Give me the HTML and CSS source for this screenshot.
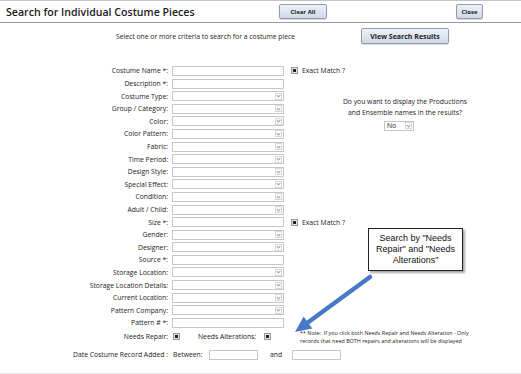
FILE: index.html
```html
<!DOCTYPE html>
<html>
<head>
<meta charset="utf-8">
<link rel="stylesheet" href="styles.css">
</head>
<body>
<div class="page">
  <header class="top">
    <h1 class="title">Search for Individual Costume Pieces</h1>
    <button class="btn btn-clear">Clear All</button>
    <button class="btn btn-close">Close</button>
  </header>
  <div class="intro">
    <p class="intro-text">Select one or more criteria to search for a costume piece</p>
    <button class="btn btn-view">View Search Results</button>
  </div>
  <div class="main">
    <div class="form">
      <label class="lbl">Costume Name *:</label><div class="txt"></div><div class="extra"><span class="chk"></span><span class="extra-text">Exact Match ?</span></div>
      <label class="lbl">Description *:</label><div class="txt"></div><div></div>
      <label class="lbl">Costume Type:</label><div class="sel"><span class="arr"></span></div><div></div>
      <label class="lbl">Group / Category:</label><div class="sel"><span class="arr"></span></div><div></div>
      <label class="lbl">Color:</label><div class="sel"><span class="arr"></span></div><div></div>
      <label class="lbl">Color Pattern:</label><div class="sel"><span class="arr"></span></div><div></div>
      <label class="lbl">Fabric:</label><div class="sel"><span class="arr"></span></div><div></div>
      <label class="lbl">Time Period:</label><div class="sel"><span class="arr"></span></div><div></div>
      <label class="lbl">Design Style:</label><div class="sel"><span class="arr"></span></div><div></div>
      <label class="lbl">Special Effect:</label><div class="sel"><span class="arr"></span></div><div></div>
      <label class="lbl">Condition:</label><div class="sel"><span class="arr"></span></div><div></div>
      <label class="lbl">Adult / Child:</label><div class="sel"><span class="arr"></span></div><div></div>
      <label class="lbl">Size *:</label><div class="txt"></div><div class="extra"><span class="chk"></span><span class="extra-text">Exact Match ?</span></div>
      <label class="lbl">Gender:</label><div class="sel"><span class="arr"></span></div><div></div>
      <label class="lbl">Designer:</label><div class="sel"><span class="arr"></span></div><div></div>
      <label class="lbl">Source *:</label><div class="txt"></div><div></div>
      <label class="lbl">Storage Location:</label><div class="sel"><span class="arr"></span></div><div></div>
      <label class="lbl">Storage Location Details:</label><div class="sel"><span class="arr"></span></div><div></div>
      <label class="lbl">Current Location:</label><div class="sel"><span class="arr"></span></div><div></div>
      <label class="lbl">Pattern Company:</label><div class="sel"><span class="arr"></span></div><div></div>
      <label class="lbl">Pattern # *:</label><div class="txt"></div><div></div>
      <label class="lbl">Needs Repair:</label>
      <div class="needs"><span class="chk"></span><span class="needs-alt">Needs Alterations:</span><span class="chk"></span></div>
      <p class="note">** Note:&nbsp; If you click both Needs Repair and Needs Alteration - Only<br>records that need BOTH repairs and alterations will be displayed</p>
      <label class="lbl">Date Costume Record Added :</label>
      <div class="dates"><span class="between">Between:</span><div class="txt date-in"></div><span class="and">and</span><div class="txt date-in"></div></div>
    </div>
    <aside class="side">
      <p class="side-q">Do you want to display the Productions<br>and Ensemble names in the results?</p>
      <div class="sel sel-no"><span class="no-val">No</span><span class="arr"></span></div>
    </aside>
  </div>
  <div class="callout">Search by "Needs<br>Repair" and "Needs<br>Alterations"</div>
  <svg class="arrow" width="85" height="65" viewBox="0 0 85 65">
    <line x1="80" y1="5" x2="17.5" y2="50.8" stroke="#4a78c8" stroke-width="4.5" stroke-linecap="round"/>
    <polygon points="5,60 22.3,56.4 13.6,44.6" fill="#4a78c8"/>
  </svg>
</div>
</body>
</html>
```
FILE: styles.css
```css
* { box-sizing: border-box; }
html, body { margin: 0; padding: 0; background: #fff; }
body {
  font-family: "Open Sans", "Noto Sans", sans-serif;
  font-size: 6.8px;
  color: #222;
  width: 521px;
  height: 374px;
  overflow: hidden;
}
.page { position: relative; width: 521px; height: 374px; border-bottom: 1px solid #e4e4e4; }
.top {
  display: flex;
  align-items: center;
  height: 23px;
  border-top: 1px solid #c4c4c4;
  border-bottom: 1px solid #9a9a9a;
}
.title {
  margin: 1px 0 0 6px;
  width: 273px;
  font-size: 10.6px;
  font-weight: 600;
  color: #1a1a1a;
  white-space: nowrap;
}
.btn {
  font-family: inherit;
  font-weight: 700;
  color: #222;
  border: 1px solid #8e9bb0;
  border-radius: 2px;
  background: linear-gradient(#eef2f8, #cfd9e8);
  box-shadow: 0 1px 1px rgba(0,0,0,0.15);
  padding: 0;
  display: flex;
  align-items: center;
  justify-content: center;
}
.btn-clear { width: 48px; height: 15px; font-size: 6px; }
.btn-close { width: 27px; height: 15px; font-size: 6px; margin-left: 129px; }
.intro { display: flex; align-items: center; height: 16px; margin-top: 5px; }
.intro-text { margin: 1px 0 0 116px; width: 245px; }
.btn-view { width: 88px; height: 16px; font-size: 7px; }
.main { display: flex; margin-top: 20.7px; }
.form {
  width: 300px;
  display: grid;
  grid-template-columns: 168px 112px 20px;
  grid-template-rows: repeat(21, 12.6px) 15.4px 20.6px;
  column-gap: 4px;
  align-items: center;
}
.lbl { text-align: right; white-space: nowrap; }
.txt { height: 10px; border: 1px solid #c6c6c6; background: #fff; }
.sel {
  height: 10px;
  border: 1px solid #c6c6c6;
  display: flex;
  align-items: center;
  justify-content: flex-end;
  padding-right: 1px;
}
.arr {
  width: 7px;
  height: 7px;
  border: 1px solid #d8d8d8;
  display: flex;
  align-items: center;
  justify-content: center;
}
.arr::before {
  content: "";
  width: 2px;
  height: 2px;
  border-right: 1px solid #9a9a9a;
  border-bottom: 1px solid #9a9a9a;
  transform: rotate(45deg);
  margin-top: -1px;
}
.extra { display: flex; align-items: center; white-space: nowrap; padding-left: 3px; }
.chk {
  width: 7px;
  height: 7px;
  border: 1px solid #9a9a9a;
  background: #e4e4e4;
  display: flex;
  align-items: center;
  justify-content: center;
  flex: none;
}
.chk::before { content: ""; width: 3px; height: 3px; background: #222; }
.extra-text { margin-left: 4px; }
.needs { display: flex; align-items: center; white-space: nowrap; padding-left: 1px; }
.needs-alt { margin-left: 18px; margin-right: 8px; }
.note {
  margin: 0 0 0 12px;
  font-size: 5.4px;
  line-height: 8px;
  white-space: nowrap;
}
.dates { grid-column: 2 / 4; display: flex; align-items: center; white-space: nowrap; padding-left: 1px; }
.between { flex: none; width: 36px; }
.date-in { flex: none; width: 49px; }
.and { flex: none; margin: 0 10px 0 12px; }
.side { flex: none; width: 210px; display: flex; flex-direction: column; align-items: center; padding-top: 31px; }
.side-q { margin: 0; text-align: center; line-height: 11px; }
.sel-no { width: 30px; margin-top: 3px; margin-left: -12px; justify-content: space-between; padding-left: 2px; }
.callout {
  position: absolute;
  left: 368px;
  top: 228px;
  width: 95px;
  height: 43px;
  border: 1px solid #222;
  background: #fff;
  box-shadow: 2px 2px 2px rgba(0,0,0,0.35);
  font-family: "Liberation Sans", Arial, sans-serif;
  font-size: 9px;
  line-height: 11px;
  text-align: center;
  padding-top: 4px;
  color: #111;
}
.arrow { position: absolute; left: 290px; top: 272px; }
```
